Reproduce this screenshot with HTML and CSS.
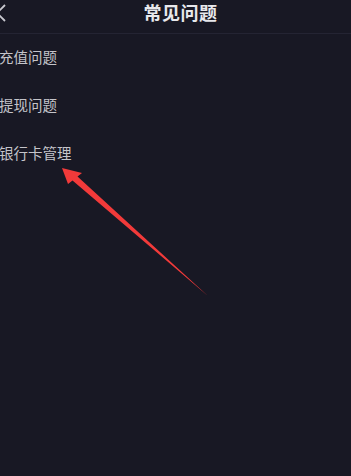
FILE: index.html
```html
<!DOCTYPE html>
<html lang="zh">
<head>
<meta charset="utf-8">
<link rel="stylesheet" href="styles.css">
</head>
<body>
<div class="page">
  <header class="header">
    <svg class="back" width="12" height="20" viewBox="0 0 12 20"><path d="M5 1 L-3 9 L5 17" fill="none" stroke="#c9c9d0" stroke-width="1.8"/></svg>
    <h1 class="title">常见问题</h1>
  </header>
  <ul class="list">
    <li class="item">充值问题</li>
    <li class="item">提现问题</li>
    <li class="item">银行卡管理</li>
  </ul>
  <svg class="arrow" width="351" height="476" viewBox="0 0 351 476">
    <polygon points="62,168 82,173 77.5,176.5 208,296 72.5,180.5 68,184" fill="#f23a3a"/>
  </svg>
</div>
</body>
</html>
```

FILE: styles.css
```css
html, body {
  margin: 0;
  padding: 0;
  background: #181824;
}
.page {
  position: relative;
  width: 351px;
  height: 476px;
  overflow: hidden;
  background: #181824;
  font-family: "Noto Sans CJK SC", "Noto Sans", sans-serif;
}
.header {
  position: relative;
  height: 33px;
  border-bottom: 1px solid #242433;
  display: flex;
  justify-content: center;
  align-items: flex-start;
}
.back {
  position: absolute;
  left: 0;
  top: 4px;
}
.title {
  margin: 0;
  margin-left: 10px;
  font-size: 18px;
  line-height: 24px;
  font-weight: 700;
  color: #e8e8ec;
  letter-spacing: 0.5px;
}
.list {
  list-style: none;
  margin: 0;
  padding: 9px 0 0 0;
}
.item {
  height: 48px;
  line-height: 28px;
  margin-left: -1px;
  font-size: 14.5px;
  color: #c4c4ca;
}
.arrow {
  position: absolute;
  left: 0;
  top: 0;
}
```
